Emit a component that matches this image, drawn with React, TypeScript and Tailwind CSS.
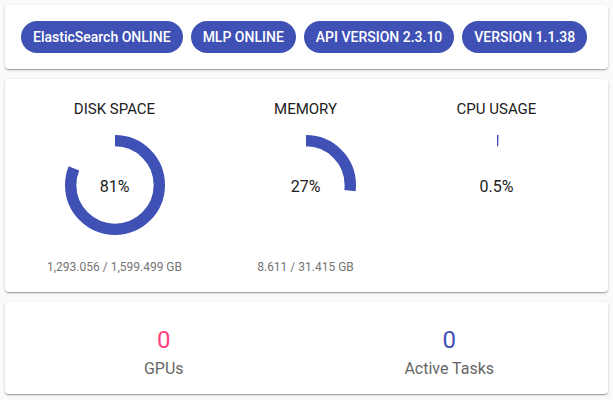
import React from 'react';

const chips = ['ElasticSearch ONLINE', 'MLP ONLINE', 'API VERSION 2.3.10', 'VERSION 1.1.38'];

const gauges = [
  { title: 'DISK SPACE', value: 81, label: '81%', detail: '1,293.056 / 1,599.499 GB' },
  { title: 'MEMORY', value: 27, label: '27%', detail: '8.611 / 31.415 GB' },
  { title: 'CPU USAGE', value: 0.5, label: '0.5%', detail: '' },
];

const CIRC = 2 * Math.PI * 19.5;

const Ring: React.FC<{ value: number; label: string }> = ({ value, label }) => (
  <div className="relative w-[100px] h-[100px]">
    <svg className="w-[100px] h-[100px] -rotate-90" viewBox="22 22 44 44">
      <circle
        cx="44"
        cy="44"
        r="19.5"
        fill="none"
        stroke="#3f51b5"
        strokeWidth="5"
        strokeDasharray={CIRC.toFixed(3)}
        style={{ strokeDashoffset: ((100 - value) / 100) * CIRC }}
      />
    </svg>
    <div className="absolute inset-0 pt-[3px] flex items-center justify-center text-[16px] text-[#212121]">{label}</div>
  </div>
);

export default function App() {
  return (
    <div className="min-h-screen bg-[#fafafa] p-[5px] flex flex-col gap-[10px] font-['Roboto',sans-serif] antialiased">
      {/* Status chips */}
      <div className="bg-white rounded shadow-[0_1px_3px_rgba(0,0,0,0.2),0_1px_1px_rgba(0,0,0,0.14),0_2px_1px_-1px_rgba(0,0,0,0.12)] pl-[16px] pr-4 py-4 flex items-center gap-2">
        {chips.map((c) => (
          <span key={c} className="h-8 px-3 rounded-full bg-[#3f51b5] text-white text-[14px] font-medium flex items-center whitespace-nowrap">
            {c}
          </span>
        ))}
      </div>

      {/* Gauges */}
      <div className="bg-white rounded shadow-[0_1px_3px_rgba(0,0,0,0.2),0_1px_1px_rgba(0,0,0,0.14),0_2px_1px_-1px_rgba(0,0,0,0.12)] pl-[14px] pr-4 pt-[18px] pb-4 grid grid-cols-3">
        {gauges.map((g) => (
          <div key={g.title} className="flex flex-col items-center">
            <div className="text-[15px] leading-6 text-[#212121]">{g.title}</div>
            <div className="mt-[14px]">
              <Ring value={g.value} label={g.label} />
            </div>
            <div className="mt-[23px] h-[18px] text-[12px] leading-[18px] text-[#757575]">{g.detail}</div>
          </div>
        ))}
      </div>

      {/* Counters */}
      <div className="bg-white rounded shadow-[0_1px_3px_rgba(0,0,0,0.2),0_1px_1px_rgba(0,0,0,0.14),0_2px_1px_-1px_rgba(0,0,0,0.12)] px-4 pt-[22px] pb-[13px] grid grid-cols-2">
        <div className="flex flex-col items-center">
          <div className="text-[24px] leading-8 text-[#ff4081]">0</div>
          <div className="mt-px text-[16px] leading-6 text-[#666666]">GPUs</div>
        </div>
        <div className="flex flex-col items-center">
          <div className="text-[24px] leading-8 text-[#3f51b5]">0</div>
          <div className="mt-px text-[16px] leading-6 text-[#666666]">Active Tasks</div>
        </div>
      </div>
    </div>
  );
}
